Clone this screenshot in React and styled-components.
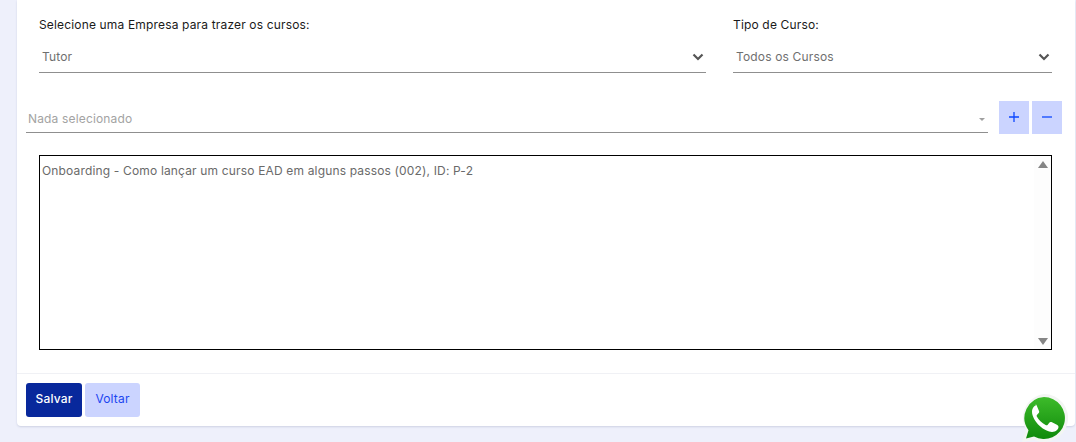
import React from 'react';
import styled, { createGlobalStyle } from 'styled-components';

const GlobalStyle = createGlobalStyle`
  html, body {
    margin: 0;
    height: 100%;
    overflow: hidden;
    background: #eef0fb;
  }
  body {
    font-family: 'Inter', 'Open Sans', sans-serif;
    letter-spacing: 0.16px;
  }
`;

function Chevron() {
  return (
    <ChevronIcon viewBox="0 0 12 8">
      <path d="M1.5 1.5 6 6l4.5-4.500" fill="none" stroke="#555" strokeWidth="2.2" />
    </ChevronIcon>
  );
}

function WhatsappLogo() {
  return (
    <WhatsappIcon viewBox="0 0 48 49">
      <defs>
        <linearGradient id="wa" x1="0" y1="0" x2="0" y2="1">
          <stop offset="0" stopColor="#3dbb2a" />
          <stop offset="1" stopColor="#0f8a0b" />
        </linearGradient>
      </defs>
      <path d="M24 1a24 24 0 1 1-9.500 46L2 49l4-12.500A24 24 0 0 1 24 1z" fill="#f3f5f3" />
      <path d="M24 4a21 21 0 1 1-10 39.500L6 45.500l2.500-8.200A21 21 0 0 1 24 4z" fill="url(#wa)" />
      <path d="M17 12c-1.800 0-5 2.500-5 6.800 0 4.500 3.300 10 7.500 14 4.300 4 9 6.200 12.500 6.200 4 0 6.500-3 6.500-5 0-1-.5-1.600-1.600-2.200l-5.400-2.700c-1.100-.4-1.600-.2-2.200.6l-1.800 2.200c-.5.5-1.100.5-1.900.1-3.800-1.800-7-4.900-8.800-8.400-.3-.8-.2-1.300.3-1.900l1.600-1.800c.6-.7.600-1.300.2-2.200l-2.200-5.100c-.3-.9-.9-1.600-1.700-1.600z" fill="#fff" />
    </WhatsappIcon>
  );
}

export default function App() {
  return (
    <Page>
      <GlobalStyle />
      <Card>
        <CardBody>
          <TopRow>
            <Field $grow={667}>
              <FieldLabel>Selecione uma Empresa para trazer os cursos:</FieldLabel>
              <SelectBox>
                <SelectText>Tutor</SelectText>
                <Chevron />
              </SelectBox>
            </Field>
            <Field $grow={319}>
              <FieldLabel>Tipo de Curso:</FieldLabel>
              <SelectBox>
                <SelectText>Todos os Cursos</SelectText>
                <Chevron />
              </SelectBox>
            </Field>
          </TopRow>
          <PickerRow>
            <Picker>
              <Placeholder>Nada selecionado</Placeholder>
              <Caret />
            </Picker>
            <ButtonPair>
              <SquareButton>
                <svg width="12" height="12" viewBox="0 0 12 12">
                  <path d="M6 1v10M1 6h10" stroke="#0d47ff" strokeWidth="1.3" />
                </svg>
              </SquareButton>
              <SquareButton>
                <svg width="12" height="12" viewBox="0 0 12 12">
                  <path d="M1 6h10" stroke="#0d47ff" strokeWidth="1.3" />
                </svg>
              </SquareButton>
            </ButtonPair>
          </PickerRow>
          <ListBox>
            <ListItem>Onboarding - Como lançar um curso EAD em alguns passos (002), ID: P-2</ListItem>
            <ScrollTrack>
              <ScrollArrow $up />
              <ScrollArrow />
            </ScrollTrack>
          </ListBox>
        </CardBody>
        <CardFooter>
          <SaveButton>Salvar</SaveButton>
          <BackButton>Voltar</BackButton>
        </CardFooter>
      </Card>
      <WhatsappLogo />
    </Page>
  );
}

const Page = styled.div`
  height: 442px;
  padding-left: 17px;
  box-sizing: border-box;
`;

const Card = styled.div`
  width: 1058px;
  height: 426px;
  background: #fff;
  border-radius: 0 0 4px 4px;
  box-shadow: 0 1px 2px rgba(60, 70, 120, 0.18);
  display: flex;
  flex-direction: column;
`;

const CardBody = styled.div`
  height: 374px;
  box-sizing: border-box;
  padding: 16px 0 0 9px;
  border-bottom: 1px solid #f0f1f5;
`;

const TopRow = styled.div`
  display: flex;
  gap: 27px;
  padding-left: 13px;
  width: 1013px;
`;

const Field = styled.div`
  flex: ${(p) => p.$grow} 0 0;
`;

const FieldLabel = styled.div`
  font-size: 12px;
  line-height: 18px;
  color: #1a1a1a;
`;

const SelectBox = styled.div`
  height: 39px;
  box-sizing: border-box;
  border-bottom: 1px solid #8f8f8f;
  display: flex;
  align-items: center;
  justify-content: space-between;
  padding: 6px 2px 0 3px;
`;

const SelectText = styled.span`
  font-size: 12px;
  color: #6f6f6f;
`;

const ChevronIcon = styled.svg`
  width: 12px;
  height: 8px;
  margin-top: 2px;
`;

const PickerRow = styled.div`
  display: flex;
  align-items: flex-start;
  margin-top: 28px;
`;

const Picker = styled.div`
  width: 962px;
  height: 32px;
  box-sizing: border-box;
  border-bottom: 1px solid #8f8f8f;
  display: flex;
  align-items: center;
  justify-content: space-between;
  padding: 4px 3px 0 2px;
`;

const Placeholder = styled.span`
  font-size: 12px;
  color: #a3a3a3;
`;

const Caret = styled.span`
  width: 0;
  height: 0;
  border-left: 3px solid transparent;
  border-right: 3px solid transparent;
  border-top: 3px solid #a0a0a0;
  margin-top: 2px;
`;

const ButtonPair = styled.div`
  display: flex;
  gap: 3px;
  margin-left: 11px;
`;

const SquareButton = styled.div`
  width: 30px;
  height: 33px;
  box-sizing: border-box;
  padding-bottom: 2px;
  background: #cbd4ff;
  display: flex;
  align-items: center;
  justify-content: center;
`;

const ListBox = styled.div`
  margin: 21px 0 0 13px;
  width: 1013px;
  height: 195px;
  box-sizing: border-box;
  border: 1px solid #000;
  display: flex;
  justify-content: space-between;
`;

const ListItem = styled.div`
  font-size: 12px;
  line-height: 16px;
  color: #6a6a6a;
  padding: 7px 2px;
`;

const ScrollTrack = styled.div`
  width: 17px;
  background: #fdfdfd;
  display: flex;
  flex-direction: column;
  justify-content: space-between;
  align-items: center;
  padding: 5px 0 4px;
`;

const ScrollArrow = styled.span`
  width: 0;
  height: 0;
  border-left: 5.5px solid transparent;
  border-right: 5.5px solid transparent;
  border-${(p) => (p.$up ? 'bottom' : 'top')}: 7px solid #858585;
`;

const CardFooter = styled.div`
  display: flex;
  gap: 3px;
  padding: 9px 9px;
`;

const SaveButton = styled.div`
  width: 56px;
  height: 34px;
  box-sizing: border-box;
  padding-bottom: 3px;
  border-radius: 3px;
  background: #08289c;
  color: #fff;
  font-size: 12px;
  font-weight: 500;
  display: flex;
  align-items: center;
  justify-content: center;
`;

const BackButton = styled(SaveButton)`
  width: 55px;
  background: #cbd4ff;
  color: #1c46f0;
  font-weight: 400;
`;

const WhatsappIcon = styled.svg`
  position: fixed;
  left: 1020px;
  top: 393px;
  width: 48px;
  height: 49px;
`;
